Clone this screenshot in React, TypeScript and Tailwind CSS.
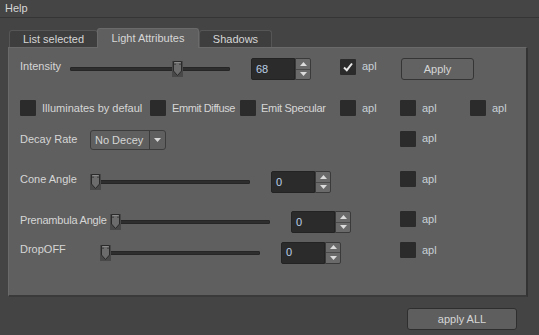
import React from 'react';

function Check({ checked = false }: { checked?: boolean }) {
  return (
    <div className="w-[16px] h-[16px] bg-[#2b2b2b] rounded-[1px] flex items-center justify-center shrink-0">
      {checked && (
        <svg width="12" height="12" viewBox="0 0 12 12">
          <path d="M2 6.5 L4.8 9.2 L10 2.5" fill="none" stroke="#e8e8e8" strokeWidth="2" />
        </svg>
      )}
    </div>
  );
}

function Apl({ checked = false }: { checked?: boolean }) {
  return (
    <div className="flex items-center gap-[6px]">
      <Check checked={checked} />
      <span className="text-[#c9d0d6]">apl</span>
    </div>
  );
}

function Slider({ width, pos }: { width: number; pos: number }) {
  return (
    <div className="relative h-[16px] shrink-0" style={{ width }}>
      <div className="absolute left-0 right-0 top-[6px] h-[4px] bg-[#2e2e2e] border border-[#262626] rounded-[1px]" />
      <svg className="absolute top-0" style={{ left: pos }} width="11" height="16" viewBox="0 0 11 16">
        <rect x="0" y="0" width="11" height="16" fill="#484848" />
        <path d="M1.5 0.5 H9.5 V10 L5.5 14.5 L1.5 10 Z" fill="#6c6c6c" stroke="#2a2a2a" />
        <path d="M2.5 1.5 H8.5" stroke="#8a8a8a" />
        <path d="M3 2.5 V4 M8 2.5 V4" stroke="#2a2a2a" />
      </svg>
    </div>
  );
}

function Spin({ value }: { value: string }) {
  return (
    <div className="flex h-[22px] shrink-0">
      <div className="w-[44px] h-full bg-[#2b2b2b] border border-[#232323] rounded-l-[2px] flex items-center pl-[4px] text-[#bcd0e6]">
        {value}
      </div>
      <div className="w-[16px] h-full flex flex-col border border-[#3a3a3a] rounded-r-[2px] bg-[#6a6a6a]">
        <div className="flex-1 flex items-center justify-center border-b border-[#4a4a4a]">
          <svg width="7" height="4" viewBox="0 0 7 4"><path d="M0 4 L3.5 0 L7 4 Z" fill="#dcdcdc" /></svg>
        </div>
        <div className="flex-1 flex items-center justify-center">
          <svg width="7" height="4" viewBox="0 0 7 4"><path d="M0 0 L3.5 4 L7 0 Z" fill="#dcdcdc" /></svg>
        </div>
      </div>
    </div>
  );
}

export default function App() {
  return (
    <div
      className="w-[539px] h-[335px] bg-[#444444] text-[#d6d6d6] text-[11px] leading-none whitespace-nowrap overflow-hidden"
      style={{ fontFamily: '"Liberation Sans", Arial, sans-serif' }}
    >
      <div className="h-[18px] border-b border-[#353535] bg-[#454545] flex items-center pl-[5px]">Help</div>

      <div className="flex items-end ml-[9px] mt-[10px] h-[19px]">
        <div className="w-[89px] h-[17px] pt-[1px] bg-[#3e3e3e] border border-b-0 border-[#565656] rounded-t-[3px] flex items-center justify-center">
          List selected
        </div>
        <div className="w-[102px] h-[20px] bg-[#5f5f5f] border border-b-0 border-[#6a6a6a] rounded-t-[3px] flex items-center justify-center -ml-[1px] relative z-10 -mb-[1px]">
          Light Attributes
        </div>
        <div className="w-[73px] h-[17px] pt-[1px] bg-[#3e3e3e] border border-b-0 border-[#565656] rounded-t-[3px] flex items-center justify-center">
          Shadows
        </div>
      </div>

      <div className="ml-[8px] w-[520px] h-[250px] bg-[#5f5f5f] border-l border-t border-[#6a6a6a] border-r-2 border-b-2 border-r-[#333333] border-b-[#3a3a3a] rounded-tr-[2px] pl-[11px] pt-[10px]">
        {/* Intensity */}
        <div className="flex items-center h-[22px]">
          <span className="w-[50px] -mt-[6px]">Intensity</span>
          <Slider width={160} pos={102} />
          <div className="w-[21px]" />
          <Spin value="68" />
          <div className="w-[29px]" />
          <div className="w-[61px] -mt-[5px]"><Apl checked /></div>
          <div className="w-[73px] h-[22px] border border-[#353535] rounded-[3px] bg-[#626262] flex items-center justify-center">
            Apply
          </div>
        </div>

        {/* checkboxes */}
        <div className="flex items-center h-[16px] mt-[20px]">
          <div className="w-[130px] flex items-center gap-[6px]"><Check /><span>Illuminates by defaul</span></div>
          <div className="w-[90px] flex items-center gap-[6px]"><Check /><span className="tracking-[-0.4px]">Emmit Diffuse</span></div>
          <div className="w-[100px] flex items-center gap-[5px]"><Check /><span className="tracking-[-0.3px]">Emit Specular</span></div>
          <div className="w-[60px]"><Apl /></div>
          <div className="w-[70px]"><Apl /></div>
          <Apl />
        </div>

        {/* Decay rate */}
        <div className="flex items-center h-[20px] mt-[14px]">
          <span className="w-[70px] -mt-[2px]">Decay Rate</span>
          <div className="w-[76px] h-[20px] border border-[#3c3c3c] rounded-[3px] flex items-center">
            <span className="flex-1 pl-[4px]">No Decey</span>
            <div className="w-[16px] h-full border-l border-[#3c3c3c] flex items-center justify-center">
              <svg width="7" height="4" viewBox="0 0 7 4"><path d="M0 0 L3.5 4 L7 0 Z" fill="#d8d8d8" /></svg>
            </div>
          </div>
          <div className="w-[234px]" />
          <div className="-mt-[3px]"><Apl /></div>
        </div>

        {/* Cone angle */}
        <div className="flex items-center h-[22px] mt-[21px]">
          <span className="w-[70px] -mt-[6px]">Cone Angle</span>
          <Slider width={160} pos={0} />
          <div className="w-[21px]" />
          <Spin value="0" />
          <div className="w-[69px]" />
          <div className="-mt-[6px]"><Apl /></div>
        </div>

        {/* Prenambula */}
        <div className="flex items-center h-[22px] mt-[18px]">
          <span className="w-[90px] -mt-[4px] tracking-[-0.2px]">Prenambula Angle</span>
          <Slider width={160} pos={0} />
          <div className="w-[21px]" />
          <Spin value="0" />
          <div className="w-[49px]" />
          <div className="-mt-[6px]"><Apl /></div>
        </div>

        {/* DropOFF */}
        <div className="flex items-center h-[21px] mt-[9px]">
          <span className="w-[80px] -mt-[6px]">DropOFF</span>
          <Slider width={160} pos={0} />
          <div className="w-[21px]" />
          <Spin value="0" />
          <div className="w-[59px]" />
          <div className="-mt-[5px]"><Apl /></div>
        </div>
      </div>

      <div className="flex mt-[11px]">
        <div className="ml-[407px] w-[110px] h-[22px] border border-[#2e2e2e] rounded-[3px] bg-[#5e5e5e] flex items-center justify-center">
          apply ALL
        </div>
      </div>
    </div>
  );
}
